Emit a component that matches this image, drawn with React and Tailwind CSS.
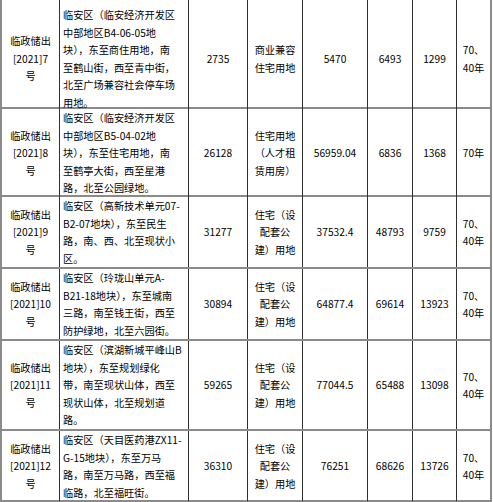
import React from 'react';

const ROWS = [
  {
    h: 'h-[109px]', pt: 'pt-[6px]',
    no: '7',
    loc: ['临安区（临安经济开发区', '中部地区B4-06-05地', '块），东至商住用地，南', '至鹤山街，西至青中街，', '北至广场兼容社会停车场', '用地。'],
    area: '2735', use: ['商业兼容', '住宅用地'], build: '5470', start: '6493', margin: '1299', years: ['70、', '40年'],
  },
  {
    h: 'h-[88px]', pt: '',
    no: '8',
    loc: ['临安区（临安经济开发区', '中部地区B5-04-02地', '块），东至住宅用地，南', '至鹤亭大街，西至星港', '路，北至公园绿地。'],
    area: '26128', use: ['住宅用地', '（人才租', '赁用房）'], build: '56959.04', start: '6836', margin: '1368', years: ['70年'],
  },
  {
    h: 'h-[72px]', pt: '',
    no: '9',
    loc: ['临安区（高新技术单元07-', 'B2-07地块），东至民生', '路，南、西、北至现状小', '区。'],
    area: '31277', use: ['住宅（设', '配套公', '建）用地'], build: '37532.4', start: '48793', margin: '9759', years: ['70、', '40年'],
  },
  {
    h: 'h-[72px]', pt: '',
    no: '10',
    loc: ['临安区（玲珑山单元A-', 'B21-18地块），东至城南', '三路，南至钱王街，西至', '防护绿地，北至六园街。'],
    area: '30894', use: ['住宅（设', '配套公', '建）用地'], build: '64877.4', start: '69614', margin: '13923', years: ['70、', '40年'],
  },
  {
    h: 'h-[90px]', pt: '',
    no: '11',
    loc: ['临安区（滨湖新城平峰山B', '地块），东至规划绿化', '带，南至现状山体，西至', '现状山体，北至规划道', '路。'],
    area: '59265', use: ['住宅（设', '配套公', '建）用地'], build: '77044.5', start: '65488', margin: '13098', years: ['70、', '40年'],
  },
  {
    h: 'h-[71px]', pt: '',
    no: '12',
    loc: ['临安区（天目医药港ZX11-', 'G-15地块），东至万马', '路，南至万马路，西至福', '临路，北至福旺街。'],
    area: '36310', use: ['住宅（设', '配套公', '建）用地'], build: '76251', start: '68626', margin: '13726', years: ['70、', '40年'],
  },
];

// one cell: text lines stacked, centred unless told otherwise
function Cell({ lines, left, pt, border = 'border-r border-[#303030]' }) {
  return (
    <div className={`h-full flex items-center ${left ? 'justify-start pl-[3px]' : 'justify-center text-center'} ${pt} ${border}`}>
      <div>
        {lines.map((l, i) => (
          <div key={i} className="whitespace-nowrap">{l}</div>
        ))}
      </div>
    </div>
  );
}

export default function App() {
  return (
    <div
      className="w-[493px] h-[502px] bg-white overflow-hidden text-[10.2px] leading-[17.5px] text-black"
      style={{ fontFamily: '"Noto Sans CJK SC", "Noto Sans", sans-serif' }}
    >
      <div className="w-[492px]">
        {ROWS.map((r) => (
          <div
            key={r.no}
            className={`grid grid-cols-[60px_129px_59px_55px_65px_45px_44px_35px] border-b-2 border-[#8a8a8a] ${r.h}`}
          >
            <Cell pt={r.pt} lines={['临政储出', `[2021]${r.no}`, '号']}
              border="border-l-2 border-l-[#8a8a8a] border-r border-r-[#303030]" />
            <Cell pt={r.pt} lines={r.loc} left />
            <Cell pt={r.pt} lines={[r.area]} />
            <Cell pt={r.pt} lines={r.use} />
            <Cell pt={r.pt} lines={[r.build]} />
            <Cell pt={r.pt} lines={[r.start]} />
            <Cell pt={r.pt} lines={[r.margin]} />
            <Cell pt={r.pt} lines={r.years} border="border-r-2 border-[#8a8a8a]" />
          </div>
        ))}
      </div>
    </div>
  );
}
